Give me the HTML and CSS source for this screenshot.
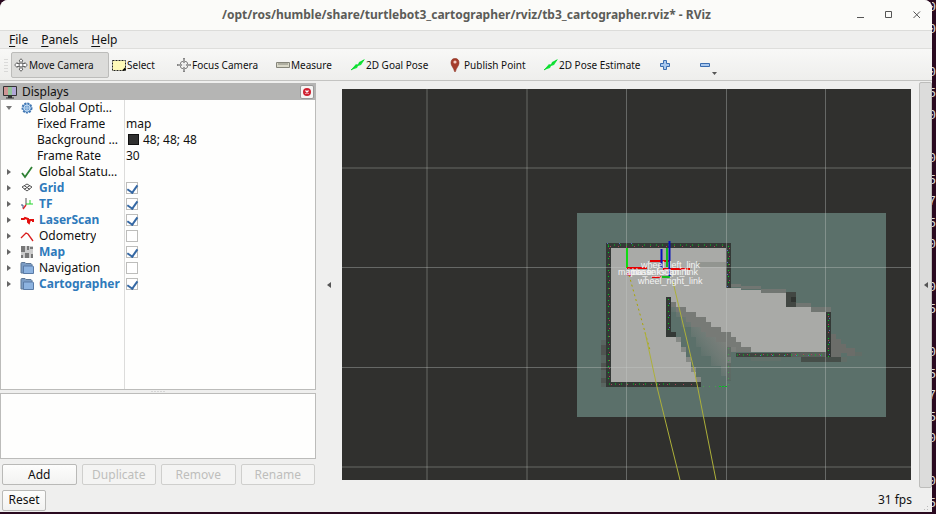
FILE: index.html
```html
<!DOCTYPE html>
<html lang="en">
<head>
<meta charset="utf-8">
<meta name="viewport" content="width=device-width, initial-scale=1">
<title>RViz</title>
<link rel="stylesheet" href="styles.css">
</head>
<body>
<svg class="defs" aria-hidden="true">
  <symbol id="move" viewBox="0 0 14 14"><g fill="#fff" stroke="#666" stroke-width="1"><path d="M7 .7 9 3H8v2.500h3V4.500L13.300 7 11 9.500V8.500H8V11h1l-2 2.300L5 11h1V8.500H3v1L.7 7 3 4.500v1h3V3H5z"/><circle cx="7" cy="7" r="2"/></g></symbol>
  <symbol id="focus" viewBox="0 0 14 14"><g fill="none" stroke="#858585"><circle cx="7" cy="7" r="4"/><path d="M7 0v5M7 9v5M0 7h5M9 7h5" stroke-width="2"/><path d="M7 1v12M1 7h12" stroke="#ddd" stroke-width=".6"/></g></symbol>
  <symbol id="arrow" viewBox="0 0 14 14"><path d="M0 12 5 6 7 7 8 4l6-3-4 6-3 1-1 2z" fill="#16e83b"/><path d="m0 12 13-10" stroke="#0bd32d"/></symbol>
  <symbol id="folder" viewBox="0 0 14 14"><path d="M1 2.500Q1 1.500 2 1.500h3l1 1h5l1 1V12H1z" fill="#7b9cc4" stroke="#5f7896"/><path d="M3.500 5h9q1 0 1 1v6.500H3.500z" fill="#8db3e0" stroke="#5a7ba6"/></symbol>
</svg>
<div class="desktop">
  <div class="window">
    <header class="titlebar">
      <h1>/opt/ros/humble/share/turtlebot3_cartographer/rviz/tb3_cartographer.rviz* - RViz</h1>
      <div class="window-controls">
        <button aria-label="Minimize"><svg viewBox="0 0 8 8"><path d="M0 6.500h7"/></svg></button>
        <button aria-label="Maximize"><svg viewBox="0 0 8 8"><path d="M.5.5h6v6h-6z"/></svg></button>
        <button aria-label="Close"><svg viewBox="0 0 8 8"><path d="m.5.5 6.500 6.500M7 .5.500 7"/></svg></button>
      </div>
    </header>
    <nav class="menubar">
      <button><u>F</u>ile</button><button><u>P</u>anels</button><button><u>H</u>elp</button>
    </nav>
    <div class="toolbar" role="toolbar">
      <span class="grip"></span>
      <button class="active"><svg><use href="#move"/></svg>Move Camera</button>
      <button><svg viewBox="0 0 14 14"><path d="M.5 2.500h13v10H.5z" fill="#fff9b8" stroke="#222" stroke-dasharray="2 1"/><path d="M10 12.500h3.500V9z"/></svg>Select</button>
      <button><svg><use href="#focus"/></svg>Focus Camera</button>
      <button><svg viewBox="0 0 14 14"><path d="M.5 4.500h13v5H.5z" fill="#d9d8c8" stroke="#85857a"/><path d="M3 5v2M5 5v2M7 5v2M9 5v2M11 5v2" stroke="#85857a"/></svg>Measure</button>
      <button><svg><use href="#arrow"/></svg>2D Goal Pose</button>
      <button class="pin"><svg viewBox="0 0 10 14"><path d="M5 .5C2 .5 1 2.500 1 5c0 3 3 5 3.500 8.500h1C6 10 9 8 9 5 9 2.500 8 .5 5 .5z" fill="#a63c2b" stroke="#8b3022" stroke-width=".6"/><circle cx="5" cy="4" r="1.600" fill="#f3c9bf"/></svg>Publish Point</button>
      <button><svg><use href="#arrow"/></svg>2D Pose Estimate</button>
      <button aria-label="Add tool"><svg class="small" viewBox="0 0 12 12"><path d="M4.500 1.500h3v3h3v3h-3v3h-3v-3h-3v-3h3z" fill="#a9c8ee" stroke="#3a6db0"/></svg></button>
      <button aria-label="Remove tool" class="minus"><svg class="small" viewBox="0 0 12 12"><path d="M1.500 4.500h9v3h-9z" fill="#a9c8ee" stroke="#3a6db0"/></svg><svg class="caret" viewBox="0 0 5 3"><path d="M0 0h5L2.500 3z"/></svg></button>
    </div>
    <main>
      <section class="sidebar">
        <div class="dock-title">
          <svg viewBox="0 0 14 14"><path d="M.5 1.500h13v9H.5z" fill="#ccc" stroke="#333"/><path d="M1 2h4v8H1z" fill="#cf9494"/><path d="M5 2h4v8H5z" fill="#93c49b"/><path d="M9 2h4v8H9z" fill="#b0a6d6"/><path d="M5 11h4v1.500h2v1H3v-1h2z" fill="#333"/></svg>
          <h2>Displays</h2>
          <button aria-label="Close Displays"><svg viewBox="0 0 10 10"><circle cx="5" cy="5" r="4" fill="#cf2030"/><path d="m3.500 3.500 3 3m0-3-3 3" stroke="#fff" stroke-width="1.200"/></svg></button>
        </div>
        <div class="tree">
          <table>
            <tbody>
              <tr><th><div><button class="twist open" aria-label="Collapse"></button><svg viewBox="0 0 14 14"><circle cx="7" cy="7" r="4.500" fill="#6d9fd2" stroke="#4378b3" stroke-width="2" stroke-dasharray="2 1"/><circle cx="7" cy="7" r="3" fill="none" stroke="#c4dcf3"/><path d="M7 3v8M3 7h8" stroke="#c4dcf3" stroke-width=".7"/></svg><span>Global Options</span></div></th><td></td></tr>
              <tr class="prop"><th><div><span>Fixed Frame</span></div></th><td>map</td></tr>
              <tr class="prop"><th><div><span>Background Color</span></div></th><td><i class="swatch"></i>48; 48; 48</td></tr>
              <tr class="prop"><th><div><span>Frame Rate</span></div></th><td>30</td></tr>
              <tr><th><div><button class="twist" aria-label="Expand"></button><svg viewBox="0 0 14 14"><path d="m2 8 3 4 7-10" fill="none" stroke="#2f8134" stroke-width="1.800"/></svg><span>Global Status: Ok</span></div></th><td></td></tr>
              <tr class="on"><th><div><button class="twist" aria-label="Expand"></button><svg viewBox="0 0 14 14"><path d="m2 6 5-3 5 3-5 4zM4 4.500l6 4M10 4.500l-6 4" fill="none" stroke="#555"/></svg><label for="c1">Grid</label></div></th><td><input type="checkbox" id="c1" checked></td></tr>
              <tr class="on"><th><div><button class="twist" aria-label="Expand"></button><svg viewBox="0 0 14 14"><g fill="none"><path d="M6 8V1" stroke="#555"/><path d="M6 7h7M10 3v4" stroke="#25d52d"/><path d="m6 8-3 4" stroke="#df2929" stroke-width="1.400"/><path d="M1 8h2v3" stroke="#3b4f80"/></g></svg><label for="c2">TF</label></div></th><td><input type="checkbox" id="c2" checked></td></tr>
              <tr class="on"><th><div><button class="twist" aria-label="Expand"></button><svg viewBox="0 0 14 14"><path d="M1 6h3l1-1 3 1v3l1 1 1-3h3v2" fill="none" stroke="#e3100e" stroke-width="2"/></svg><label for="c3">LaserScan</label></div></th><td><input type="checkbox" id="c3" checked></td></tr>
              <tr><th><div><button class="twist" aria-label="Expand"></button><svg viewBox="0 0 14 14"><path d="m1 9 5-5 2 1 5 7" fill="none" stroke="#d91e1e" stroke-width="1.300"/></svg><label for="c4">Odometry</label></div></th><td><input type="checkbox" id="c4"></td></tr>
              <tr class="on"><th><div><button class="twist" aria-label="Expand"></button><svg viewBox="0 0 14 14"><path d="M1 1h12v12H1z" fill="#ccc"/><path d="M1 1h4v6H1zM7 1h2v4H7zM10 2h3v2h-3zM5 8h4v5H5zM1 10h2v3H1zM11 9h2v4h-2z" fill="#777"/></svg><label for="c5">Map</label></div></th><td><input type="checkbox" id="c5" checked></td></tr>
              <tr><th><div><button class="twist" aria-label="Expand"></button><svg><use href="#folder"/></svg><label for="c6">Navigation</label></div></th><td><input type="checkbox" id="c6"></td></tr>
              <tr class="on"><th><div><button class="twist" aria-label="Expand"></button><svg><use href="#folder"/></svg><label for="c7">Cartographer</label></div></th><td><input type="checkbox" id="c7" checked></td></tr>
            </tbody>
          </table>
        </div>
        <div class="splitter"></div>
        <div class="description"></div>
        <div class="actions">
          <button>Add</button><button disabled>Duplicate</button><button disabled>Remove</button><button disabled>Rename</button>
        </div>
      </section>
      <button class="handle left" aria-label="Hide left dock"></button>
      <div class="view">
        <svg viewBox="342 89 569 391" preserveAspectRatio="xMidYMid slice" role="img" aria-label="3D view">
          <defs>
            <linearGradient id="shade" gradientUnits="userSpaceOnUse" x1="718" y1="330" x2="692" y2="350"><stop offset="0" stop-color="#7d807c"/><stop offset=".5" stop-color="#6e7a75"/><stop offset="1" stop-color="#5b706a"/></linearGradient>
          </defs>
          <path d="M342 89h569v391H342z" fill="#30302e"/>
          <path d="M577 213h309v204H577z" fill="#5b706a"/>
          <!-- free space -->
          <path d="M611 248H726V288H741V290H761V292H786V307H826V352H751V347H741V342H736V337H731V332H721V327H711V322H706V317H696V312H686V307H676V302H671V297H666V337H676V342H681V352H686V362H691V372H696V382H611z" fill="#a9aaa7"/>
          <path d="M671 302H676V307H686V312H696V317H706V322H711V327H721V332H731V337H736V342H741V347H751V352H731V380H726V376H721V366H711V356H701V347H696V337H691V327H681V317H676V312H671z" fill="url(#shade)"/>
          <path d="M671 302H676V307H686V312H696V317H706V322H711V327H721V332H731V337H736V342H741V347H751V352H736V347H726V342H716V337H706V332H701V327H691V322H686V317H681V312H676V307H671z" fill="#777a76"/>
          <path d="M676 337H681V347H686V357H691V367H696V377H701V382H696V372H691V362H686V352H681V342H676z" fill="#858985"/>
          <path d="M731 284h10v3h-10zM741 286h20v3h-20zM761 289h25v4h-25zM796 303h15v4h-15zM811 307h20v5h-20z" fill="#717672"/>
          <path d="M696 262h30v5h-30z" fill="#929590"/>
          <path d="M601 340h5v47h-5z" fill="#596560"/><path d="M601 345h5v10h-5zM601 363h5v7h-5zM601 378h5v5h-5z" fill="#505551"/>
          <path d="M831 334h5v5h5v5h5v4h9v8h-8v-3h-6v8h-10z" fill="#6b6d69"/><path d="M841 357h6v5h-6zM855 352h7v4h-7z" fill="#626d67"/>
          <path d="M751 357h30v4h-30z" fill="#62706a"/><path d="M801 357h40v5h-40z" fill="#464e49"/>
          <path d="M736 353h55v4h-55z" fill="#3f4541"/><path d="M791 352h35v5h-35z" fill="#59605b"/>
          <!-- walls -->
          <path d="M606 243h125v45h-5v-40H611v134h90v5h-95zM666 297h5v35h5v5h-10zM826 312h5v45h-5z" fill="#343936"/>
          <path d="M786 292h10v15h-10z" fill="#424743"/><path d="M791 297h5v5h-5z" fill="#303431"/>
          <path d="M727 347h4v10h-4zM727 363h4v18h-4z" fill="#53605a" opacity=".6"/>
          <!-- grid -->
          <path d="M427 89v391M527 89v391M626.500 89v391M726.500 89v391M825.500 89v391M342 168h569M342 267.500h569M342 367.500h569M342 467h569" fill="none" stroke="#c8ccca" stroke-opacity=".36"/>
          <!-- laser points -->
          <g fill="none" stroke-width="1">
            <path d="M608 245h120M608.500 246v138M728.500 246v42M668.500 299v36M828.500 314v43M737 355h90M609 384h63" stroke="#00ce1e" stroke-dasharray="1 5"/>
            <path d="M610 246.500h118M609.500 248v134M729.500 248v40M828.500 316v40M739 354.500h85M611 384.500h85" stroke="#aa4557" stroke-dasharray="1 7"/>
            <path d="M607 243.500h30M727.500 250v38M669.500 303v30M829.500 318v38M760 355.500h66" stroke="#536fc0" stroke-dasharray="1 11"/>
            <path d="M703 386.500h14M728.500 348v38" stroke="#47a050" stroke-dasharray="1 5"/><path d="M719 386.500h9" stroke="#00c51d" stroke-dasharray="2 1"/>
          </g>
          <!-- frame links and axes -->
          <path d="m629 275 21 75" fill="none" stroke="#aaa600" stroke-dasharray="2 3"/>
          <path d="m645 332 12 55 23 93M673 282l22 92 21 106" fill="none" stroke="#adb03a"/>
          <g fill="none" stroke-width="2">
            <path d="M627 268v-20" stroke="#10dc12"/><path d="M627 268h20" stroke="#e70000"/>
            <path d="M650 261h20M663 269h27M652 277h9" stroke="#e40000"/>
            <path d="M667 267v-19M662 277h8" stroke="#12bd1d"/>
            <path d="M661.500 268v-19M669.500 276v-35" stroke="#0810b8"/>
          </g>
          <path d="m626 275 4-4 1 5z" fill="#d4154d"/>
          <g class="frames"><text x="641" y="268">wheel_left_link</text><text x="618" y="275">map</text><text x="632" y="275">base_footprint</text><text x="628" y="275">imu_link</text><text x="636" y="275">base_scan_link</text><text x="638" y="284">wheel_right_link</text></g>
        </svg>
      </div>
      <button class="handle right" aria-label="Show right dock"></button>
    </main>
    <footer><button>Reset</button><span>31 fps</span><i class="resize"></i></footer>
  </div>
  <div class="terminal" aria-hidden="true"><span>0</span><span>0</span><span></span><span>0</span><span>5</span><span>0</span><span></span><span>0</span><span>5</span><span>7</span><span>5</span><span>0</span><span></span><span>0</span><span>5</span><span></span><span>0</span><span>5</span><span>7</span><span>5</span><span>0</span><span></span><span>0</span><span>5</span></div>
</div>
</body>
</html>
```
FILE: styles.css
```css
* { box-sizing: border-box; }
body { margin: 0; font: 12px/16px "Noto Sans", "Open Sans", sans-serif; color: #111; }
button { font: inherit; color: inherit; border: 0; padding: 0; background: none; }
h1, h2 { margin: 0; }
svg { display: block; flex: none; }
.defs { width: 0; height: 0; position: absolute; }

.desktop { display: flex; height: 100vh; padding-bottom: 2px; background: #2a0a20; overflow: hidden; }
.window { flex: 1; min-width: 0; display: flex; flex-direction: column; background: #efefee; border-radius: 8px 8px 0 0; overflow: hidden; }
.terminal { width: 4px; display: flex; flex-direction: column; justify-content: space-between; align-items: flex-end; overflow: hidden; color: #ddd; font-family: "Liberation Mono", monospace; font-size: 13px; }
.terminal span { min-height: 16px; }

.titlebar { display: flex; align-items: center; height: 31px; flex: none; background: #fbfbf9; border-bottom: 1px solid #dcdcda; padding-right: 11px; }
.titlebar h1 { flex: 1; padding-left: 76px; text-align: center; font-size: 12px; color: #5c5c58; white-space: nowrap; }
.window-controls { display: flex; gap: 20px; }
.window-controls svg { width: 8px; height: 8px; fill: none; stroke: #555; }

.menubar { display: flex; align-items: center; gap: 13px; height: 18px; flex: none; padding-left: 9px; border-bottom: 1px solid #dededc; }
.menubar u { text-underline-offset: 2px; }

.toolbar { display: grid; grid-template-columns: 7px 98px 65px 99px 75px 99px 94px 115px 40px 24px; align-items: center; height: 32px; flex: none; padding-left: 4px; font-size: 10px; background: linear-gradient(#f8f8f7, #eeeeec); border-bottom: 1px solid #c3c3c1; white-space: nowrap; }
.toolbar button { display: flex; align-items: center; gap: 1px; height: 26px; padding-left: 3px; }
.toolbar .active { padding-left: 2px; background: #dcdcda; border: 1px solid #bcbcba; border-radius: 2px; }
.toolbar svg { width: 14px; height: 14px; }
.toolbar .pin { gap: 4px; }
.toolbar .pin svg { width: 10px; }
.toolbar .small { width: 12px; height: 12px; }
.toolbar .minus .caret { width: 5px; height: 3px; align-self: flex-end; margin-bottom: 3px; fill: #555; }
.grip { width: 4px; height: 14px; background: radial-gradient(#bbb 30%, transparent 40%) 0 0 / 2px 3px; }

main { flex: 1; min-height: 0; display: flex; }
.sidebar { width: 316px; flex: none; display: flex; flex-direction: column; padding-top: 2px; }
.dock-title { display: flex; align-items: center; gap: 5px; height: 17px; flex: none; padding: 0 2px 0 3px; background: #b5b5b4; }
.dock-title > svg { width: 14px; height: 14px; }
.dock-title h2 { flex: 1; font-size: 12px; font-weight: 400; }
.dock-title button { display: grid; place-items: center; width: 14px; height: 14px; background: #f5f5f4; border: 1px solid #999; border-radius: 2px; }
.dock-title button svg { width: 10px; height: 10px; }
.tree { flex: 1; min-height: 0; overflow: hidden; background: linear-gradient(#dcdcdb, #dcdcdb) 123px 0 / 1px 100% no-repeat #fefefd; border: 1px solid #bcbcba; border-top: 0; }
table { width: 100%; border-collapse: collapse; table-layout: fixed; font-size: 12px; }
th { width: 124px; padding: 0; font-weight: 400; text-align: left; }
th div { display: flex; align-items: center; height: 16px; padding: 0 3px; }
th svg { width: 14px; height: 14px; margin: 0 5px 0 6px; }
th span, th label { min-width: 0; overflow: hidden; text-overflow: ellipsis; white-space: nowrap; }
th span { margin-right: 4px; }
td { height: 16px; padding: 0 1px; line-height: 16px; white-space: nowrap; }
.prop th div { padding-left: 36px; }
.prop th span { margin-right: 0; }
.on label { color: #2f7abb; font-weight: 700; }
.twist { display: grid; place-items: center; width: 10px; height: 10px; flex: none; }
.twist::before { content: ""; border: 3px solid transparent; border-left: 4px solid #666; border-right: 0; }
.twist.open::before { border: 3px solid transparent; border-top: 4px solid #777; border-bottom: 0; }
.swatch { display: inline-block; width: 11px; height: 11px; margin: 0 4px 0 2px; vertical-align: -1px; background: #303030; border: 1px solid #111; }
input { appearance: none; display: grid; place-items: center; width: 12px; height: 12px; margin: 0; border: 1px solid #bdbdbb; background: #fff; }
input:checked::before { content: ""; width: 5px; height: 8px; margin-bottom: 3px; border: solid #3568a4; border-width: 0 2px 2px 0; transform: rotate(35deg); }
.splitter { height: 3px; flex: none; background: radial-gradient(#bbb 30%, transparent 40%) center / 3px 3px repeat-x; background-clip: content-box; padding: 0 150px; }
.description { height: 66px; flex: none; background: #fefefd; border: 1px solid #bcbcba; }
.actions { display: grid; grid-template-columns: repeat(4, 1fr); gap: 5px; padding: 5px 1px 3px 2px; }
.actions button, footer button { height: 21px; background: linear-gradient(#fdfdfc, #f2f2f1); border: 1px solid #b9b9b7; border-radius: 2px; font-size: 12px; }
.actions button:disabled { color: #bebebc; border-color: #cfcfcd; background: #f4f4f3; }

.handle { display: grid; place-items: center; flex: none; }
.handle::before { content: ""; border: 3px solid transparent; border-right: 4px solid #555; border-left: 0; }
.handle.left { width: 26px; }
.handle.right { width: 13px; margin-top: 1px; background: #dcdcdb; border: 1px solid #bdbdbb; border-radius: 2px; }
.view { flex: 1; min-width: 0; margin: 8px 8px 8px 0; overflow: hidden; background: #30302e; }
.view svg { width: 100%; height: 100%; }
.frames { fill: #f4f4f4; font: 9px "Liberation Sans", Arial, sans-serif; }

footer { display: flex; align-items: center; height: 24px; flex: none; padding: 0 2px; }
footer button { width: 44px; }
footer span { margin-left: auto; font-size: 12px; }
.resize { width: 10px; height: 10px; margin-left: 8px; align-self: flex-end; background: radial-gradient(#bbb 30%, transparent 40%) 0 0 / 3px 3px; clip-path: polygon(100% 0, 100% 100%, 0 100%); }
```
